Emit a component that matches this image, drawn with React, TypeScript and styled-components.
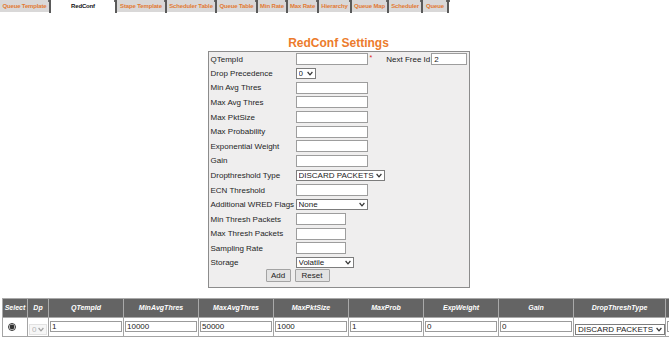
import React from 'react'
import styled, { createGlobalStyle } from 'styled-components'

const GlobalStyle = createGlobalStyle`
  html, body {
    margin: 0;
    padding: 0;
    background: #fff;
    overflow: hidden;
  }
  body {
    font-family: 'Liberation Sans', Arial, sans-serif;
    color: #222;
  }
`

const TABS = [
  { label: 'Queue Template', width: 49 },
  { label: 'RedConf', width: 64, active: true },
  { label: 'Stape Template', width: 48 },
  { label: 'Scheduler Table', width: 48 },
  { label: 'Queue Table', width: 39 },
  { label: 'Min Rate', width: 28 },
  { label: 'Max Rate', width: 29 },
  { label: 'Hierarchy', width: 31 },
  { label: 'Queue Map', width: 35 },
  { label: 'Scheduler', width: 32 },
  { label: 'Queue', width: 24 },
]

const TabBar = styled.div`
  display: flex;
  height: 13px;
`

const Tab = styled.div<{ $w: number; $active?: boolean }>`
  width: ${({ $w }) => $w}px;
  height: 12px;
  display: flex;
  align-items: center;
  justify-content: center;
  font-size: 6px;
  font-weight: bold;
  letter-spacing: -0.15px;
  white-space: nowrap;
  overflow: hidden;
  background: ${({ $active }) => ($active ? '#fff' : '#d9d8d8')};
  color: ${({ $active }) => ($active ? '#111' : '#e27a33')};
`

const TabSep = styled.svg`
  width: 2px;
  height: 13px;
  flex: none;
  overflow: visible;
`

const Main = styled.div`
  display: flex;
  flex-direction: column;
  align-items: center;
  padding-left: 8px;
  width: 669px;
  box-sizing: border-box;
`

const Title = styled.div`
  margin-top: 23px;
  height: 14px;
  line-height: 14px;
  font-size: 12px;
  font-weight: bold;
  color: #ec7b2c;
`

const Panel = styled.div`
  margin-top: 1px;
  width: 262px;
  box-sizing: border-box;
  border: 1px solid #8c8c8c;
  background: #efeeee;
  padding: 0 2px 5px 2px;
`

const Row = styled.div<{ $h?: number }>`
  display: flex;
  align-items: center;
  height: ${({ $h }) => $h ?? 14.6}px;
`

const Label = styled.span`
  width: 85px;
  flex: none;
  font-size: 8px;
  white-space: nowrap;
  color: #1e1e1e;
`

const TextInput = styled.input<{ $w?: number }>`
  width: ${({ $w }) => $w ?? 72}px;
  height: 12px;
  box-sizing: border-box;
  margin: 0;
  padding: 0 2px;
  border: 1px solid #9d9d9d;
  background: #fff;
  font-family: inherit;
  font-size: 8px;
  color: #222;
  outline: none;
`

const Asterisk = styled.span`
  margin-left: 2px;
  align-self: flex-start;
  margin-top: 2px;
  font-size: 7px;
  color: #d22;
`

const InlineLabel = styled.span`
  margin-left: 14px;
  margin-right: 1px;
  font-size: 8px;
  white-space: nowrap;
`

const SelectWrap = styled.span<{ $w: number; $off?: boolean }>`
  position: relative;
  display: inline-flex;
  width: ${({ $w }) => $w}px;
  height: 11px;
  box-sizing: border-box;
  border: 1px solid ${({ $off }) => ($off ? '#e2e2e2' : '#7c7c7c')};
  background: ${({ $off }) => ($off ? '#f6f6f6' : '#fff')};
`

const NativeSelect = styled.select<{ $off?: boolean }>`
  appearance: none;
  width: 100%;
  height: 100%;
  margin: 0;
  padding: 0 8px 0 2px;
  border: none;
  background: transparent;
  font-family: inherit;
  font-size: 8px;
  line-height: 9px;
  color: ${({ $off }) => ($off ? '#9a9a9a' : '#222')};
  outline: none;
`

const Chevron = styled.svg`
  position: absolute;
  right: 2px;
  top: 2px;
  width: 6px;
  height: 5px;
  pointer-events: none;
`

const ButtonRow = styled.div`
  display: flex;
  align-items: center;
  gap: 4px;
  height: 13px;
  padding-left: 55px;
`

const Button = styled.button<{ $w: number }>`
  width: ${({ $w }) => $w}px;
  height: 13px;
  margin: 0;
  padding: 0;
  box-sizing: border-box;
  border: 1px solid #a3a3a3;
  border-radius: 1px;
  background: #e3e3e3;
  font-family: inherit;
  font-size: 8px;
  color: #222;
`

const Grid = styled.table`
  margin: 10px 0 0 2px;
  border-collapse: collapse;
  table-layout: fixed;
  width: 738px;
`

const Th = styled.th`
  height: 19px;
  padding: 0;
  box-sizing: border-box;
  border: 1px solid #a9a9a9;
  background: #646464;
  color: #fff;
  font-size: 7px;
  font-weight: bold;
  font-style: italic;
  text-align: center;
  white-space: nowrap;
  overflow: hidden;
`

const Td = styled.td<{ $pad?: number }>`
  height: 19px;
  padding: 0 1px 0 ${({ $pad }) => $pad ?? 1}px;
  box-sizing: border-box;
  border: 1px solid #a4a4a4;
  background: #fff;
  vertical-align: middle;
`

const CellInput = styled.input`
  display: block;
  width: 100%;
  height: 11px;
  box-sizing: border-box;
  margin: 0;
  padding: 0 1px;
  border: 1px solid #9b9b9b;
  font-family: inherit;
  font-size: 8px;
  color: #222;
  outline: none;
`

const Radio = styled.input`
  display: block;
  width: 8px;
  height: 8px;
  margin: 0;
  accent-color: #333;
`

const Select = ({ w, value, options, off }: { w: number; value: string; options: string[]; off?: boolean }) => (
  <SelectWrap $w={w} $off={off}>
    <NativeSelect $off={off} defaultValue={value} disabled={off}>
      {options.map((o) => (
        <option key={o}>{o}</option>
      ))}
    </NativeSelect>
    <Chevron viewBox="0 0 6 5">
      <path d="M0.6 1 L3 3.8 L5.4 1" fill="none" stroke={off ? '#a0a0a0' : '#333'} strokeWidth="1.2" />
    </Chevron>
  </SelectWrap>
)

const DROP_TYPES = ['DISCARD PACKETS', 'MARK ECN']

const columns = [
  { name: 'Select', width: 25 },
  { name: 'Dp', width: 21 },
  { name: 'QTempId', width: 75 },
  { name: 'MinAvgThres', width: 75 },
  { name: 'MaxAvgThres', width: 75 },
  { name: 'MaxPktSize', width: 75 },
  { name: 'MaxProb', width: 75 },
  { name: 'ExpWeight', width: 75 },
  { name: 'Gain', width: 75 },
  { name: 'DropThreshType', width: 92 },
  { name: '', width: 75 },
]

const rowValues = ['1', '10000', '50000', '1000', '1', '0', '0']

const App = () => {
  return (
    <>
      <GlobalStyle />
      <TabBar>
        {TABS.map((t) => (
          <React.Fragment key={t.label}>
            <Tab $w={t.width} $active={t.active}>
              {t.label}
            </Tab>
            <TabSep viewBox="0 0 2 13">
              <rect x="-1" y="0" width="4" height="2" fill="#6a6a6a" />
              <rect x="0" y="0" width="2" height="13" fill="#5a5a5a" />
            </TabSep>
          </React.Fragment>
        ))}
      </TabBar>

      <Main>
        <Title>RedConf Settings</Title>
        <Panel>
          <Row $h={14}>
            <Label>QTempId</Label>
            <TextInput />
            <Asterisk>*</Asterisk>
            <InlineLabel>Next Free Id</InlineLabel>
            <TextInput $w={36} defaultValue="2" />
          </Row>
          <Row>
            <Label>Drop Precedence</Label>
            <Select w={20} value="0" options={['0', '1', '2']} />
          </Row>
          <Row>
            <Label>Min Avg Thres</Label>
            <TextInput />
          </Row>
          <Row>
            <Label>Max Avg Thres</Label>
            <TextInput />
          </Row>
          <Row>
            <Label>Max PktSize</Label>
            <TextInput />
          </Row>
          <Row>
            <Label>Max Probability</Label>
            <TextInput />
          </Row>
          <Row>
            <Label>Exponential Weight</Label>
            <TextInput />
          </Row>
          <Row>
            <Label>Gain</Label>
            <TextInput />
          </Row>
          <Row>
            <Label>Dropthreshold Type</Label>
            <Select w={89} value="DISCARD PACKETS" options={DROP_TYPES} />
          </Row>
          <Row>
            <Label>ECN Threshold</Label>
            <TextInput />
          </Row>
          <Row>
            <Label>Additional WRED Flags</Label>
            <Select w={72} value="None" options={['None', 'Cap Average']} />
          </Row>
          <Row>
            <Label>Min Thresh Packets</Label>
            <TextInput $w={50} />
          </Row>
          <Row>
            <Label>Max Thresh Packets</Label>
            <TextInput $w={50} />
          </Row>
          <Row>
            <Label>Sampling Rate</Label>
            <TextInput $w={50} />
          </Row>
          <Row $h={13}>
            <Label>Storage</Label>
            <Select w={58} value="Volatile" options={['Volatile', 'NonVolatile']} />
          </Row>
          <ButtonRow>
            <Button $w={25}>Add</Button>
            <Button $w={35}>Reset</Button>
          </ButtonRow>
        </Panel>
      </Main>

      <Grid>
        <colgroup>
          {columns.map((c, i) => (
            <col key={i} style={{ width: c.width }} />
          ))}
        </colgroup>
        <thead>
          <tr>
            {columns.map((c, i) => (
              <Th key={i}>{c.name}</Th>
            ))}
          </tr>
        </thead>
        <tbody>
          <tr>
            <Td $pad={5}>
              <Radio type="radio" name="sel" defaultChecked />
            </Td>
            <Td>
              <Select w={18} value="0" options={['0', '1', '2']} off />
            </Td>
            {rowValues.map((v, i) => (
              <Td key={i}>
                <CellInput defaultValue={v} />
              </Td>
            ))}
            <Td>
              <Select w={90} value="DISCARD PACKETS" options={DROP_TYPES} />
            </Td>
            <Td>
              <CellInput defaultValue="" />
            </Td>
          </tr>
        </tbody>
      </Grid>
    </>
  )
}

export default App
